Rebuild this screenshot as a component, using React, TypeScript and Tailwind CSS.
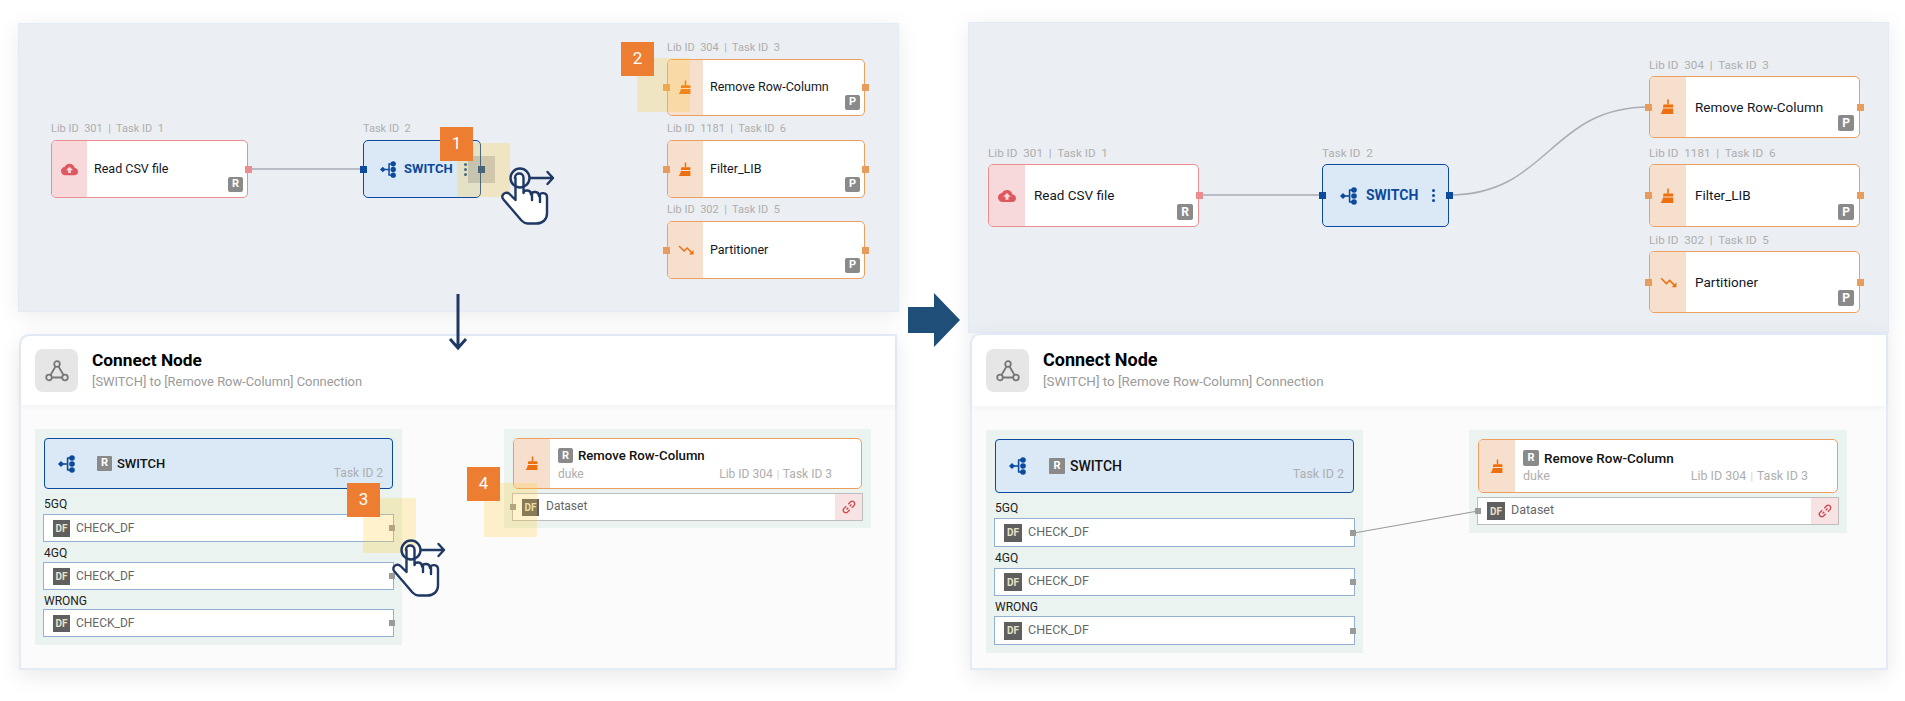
import React from 'react';

const NAVY = '#1f3864';

function CloudIcon({ size }: { size: number }) {
  return (
    <svg width={size} height={size} viewBox="0 0 24 24" fill="#e0585f">
      <path d="M19.35 10.04C18.67 6.59 15.64 4 12 4 9.11 4 6.6 5.64 5.35 8.04 2.34 8.36 0 10.91 0 14c0 3.31 2.69 6 6 6h13c2.76 0 5-2.24 5-5 0-2.64-2.05-4.78-4.65-4.96zM14 13v4h-4v-4H7l5-5 5 5h-3z" />
    </svg>
  );
}

function BroomIcon({ size }: { size: number }) {
  return (
    <svg width={size} height={size} viewBox="0 0 16 16" fill="#ee6f0d">
      <path d="M7.2 0.5h1.6v5h-1.6z" />
      <path d="M3.5 5.5h9.7v3H3z" />
      <path d="M3 9.5h10.2v5.500H0.500c1.200-1.200 2-3 2.500-5.500z" />
    </svg>
  );
}

function TrendIcon({ size }: { size: number }) {
  return (
    <svg width={size} height={size} viewBox="0 0 24 24" fill="#ee6f0d">
      <path d="M16 18l2.290-2.290-4.880-4.880-4 4L2 7.410 3.410 6l6 6 4-4 6.300 6.290L22 12v6z" />
    </svg>
  );
}

function SwitchIcon({ size }: { size: number }) {
  return (
    <svg width={size} height={size} viewBox="0 0 18 18" fill="#0b4a9c">
      <path d="M0 9l3-3 3 3-3 3z" />
      <path d="M5 8.200h5v1.600H5z" />
      <path d="M8.800 3h1.600v12H8.800z" />
      <circle cx="14" cy="3" r="2.800" />
      <circle cx="14" cy="9" r="2.800" />
      <circle cx="14" cy="15" r="2.800" />
      <path d="M9 2.300h4v1.400H9zM9 14.300h4v1.400H9z" />
    </svg>
  );
}

function NetworkIcon() {
  return (
    <svg width="24" height="22" viewBox="0 0 24 22" fill="none" stroke="#777" strokeWidth="1.800">
      <circle cx="12" cy="4" r="2.800" />
      <circle cx="4" cy="17.500" r="2.800" />
      <circle cx="20" cy="17.500" r="2.800" />
      <path d="M10.500 6.500L5.500 15M13.500 6.500l5 8.500M6.800 17.500h10.400" />
    </svg>
  );
}

function UnlinkIcon() {
  return (
    <svg width="16" height="16" viewBox="0 0 16 16" fill="none" stroke="#d2434b" strokeWidth="1.300">
      <g transform="rotate(-45 8 8)">
        <path d="M6.500 5.500H3.500a2.500 2.500 0 0 0 0 5h3" />
        <path d="M9.500 5.500h3a2.500 2.500 0 0 1 0 5h-3" />
        <path d="M4.500 8h2.500M9 8h2.500" />
      </g>
    </svg>
  );
}

// finger + ring + drag arrow
function Hand({ left, top }: { left: number; top: number }) {
  return (
    <svg className="absolute" style={{ left, top }} width="55" height="60" viewBox="0 0 55 60" fill="none" stroke={NAVY} strokeWidth="2.400" strokeLinejoin="round" strokeLinecap="round">
      <path fill="#fff" d="M15.500 11v22l-6-6c-2.500-2.500-6-1-7 1.500-.5 1.500 0 3 1 4l18 21c1.500 1.500 3 3 6 3h9c6 0 10.500-4 10.500-10V30c0-5-7-5-8-1 0-5-7-5-8-1.500 0-5-7-5-7.500-1.500V11c0-6-8.500-6-8.500 0z" />
      <path d="M32 27v6M40 29v6" />
      <circle cx="20" cy="11" r="9.500" />
      <path d="M30 11h23M47.500 5l5.500 6-5.500 6" />
    </svg>
  );
}

function Step({ n, left, top }: { n: number; left: number; top: number }) {
  return (
    <div className="absolute w-[33px] h-[34px] bg-[#ed7d31] text-white text-[17px] flex items-center justify-center" style={{ left, top }}>
      {n}
    </div>
  );
}

function Glow({ left, top, w = 53, h = 54 }: { left: number; top: number; w?: number; h?: number }) {
  return <div className="absolute bg-[#ffcc33]/25" style={{ left, top, width: w, height: h }} />;
}

function Port({ x, y, size, color }: { x: number; y: number; size: number; color: string }) {
  return <div className="absolute" style={{ left: x - size / 2, top: y - size / 2, width: size, height: size, background: color }} />;
}

type NodeProps = {
  x: number; y: number; w: number; h: number;
  name: string; label: string; badge: string;
  tone: 'red' | 'orange';
  icon: 'cloud' | 'broom' | 'trend';
  big?: boolean;
};

function FlowNode({ x, y, w, h, name, label, badge, tone, icon, big }: NodeProps) {
  const strip = big ? 36 : 35;
  const iconSize = big ? 18 : 17;
  return (
    <div className="absolute" style={{ left: x, top: y, width: w, height: h }}>
      <div className={`absolute left-0 -top-[19px] whitespace-pre leading-[16px] text-[#aeaeae] ${big ? 'text-[11.700px]' : 'text-[11px]'}`}>{label}</div>
      <div className={`h-full flex bg-white rounded-[5px] overflow-hidden border-[1.500px] ${tone === 'red' ? 'border-[#ec8d91]' : 'border-[#ec9f5f]'}`}>
        <div className={`shrink-0 flex items-center justify-center ${tone === 'red' ? 'bg-[#f8d9db]' : 'bg-[#f7dfcd]'}`} style={{ width: strip }}>
          {icon === 'cloud' && <CloudIcon size={iconSize} />}
          {icon === 'broom' && <BroomIcon size={iconSize - 2} />}
          {icon === 'trend' && <TrendIcon size={iconSize + 1} />}
        </div>
        <div className={`flex items-center text-[#111827] ${big ? 'pl-[9px] text-[13.500px]' : 'pl-[7px] text-[12.500px]'}`}>{name}</div>
      </div>
      <div className={`absolute flex items-center justify-center rounded-[2px] bg-[#8a8a8a] text-white font-bold ${big ? 'right-[6px] bottom-[7px] w-[16px] h-[16px] text-[12px]' : 'right-[5px] bottom-[6px] w-[15px] h-[15px] text-[11px]'}`}>{badge}</div>
      <Port x={-1} y={h / 2} size={7} color={tone === 'red' ? 'transparent' : '#e89c5c'} />
      <Port x={w} y={h / 2} size={7} color={tone === 'red' ? '#ec8d91' : '#e89c5c'} />
    </div>
  );
}

function SwitchNode({ x, y, w, h, big }: { x: number; y: number; w: number; h: number; big?: boolean }) {
  return (
    <div className="absolute" style={{ left: x, top: y, width: w, height: h }}>
      <div className={`absolute left-0 -top-[19px] whitespace-pre leading-[16px] text-[#aeaeae] ${big ? 'text-[11.700px]' : 'text-[11px]'}`}>Task ID  2</div>
      <div className={`h-full flex items-center rounded-[5px] bg-[#dbe9f7] border-[1.500px] border-[#0b4a9c] ${big ? 'pl-[17px]' : 'pl-[16px]'}`}>
        <SwitchIcon size={big ? 18 : 17} />
        <span className={`font-bold text-[#0b4a9c] ${big ? 'ml-[8px] text-[14px]' : 'ml-[7px] text-[13px]'}`}>SWITCH</span>
        <span className={`flex flex-col gap-[2px] ${big ? 'ml-[14px]' : 'ml-[11px]'}`}>
          <i className="block w-[3px] h-[3px] rounded-full bg-[#0b4a9c]" />
          <i className="block w-[3px] h-[3px] rounded-full bg-[#0b4a9c]" />
          <i className="block w-[3px] h-[3px] rounded-full bg-[#0b4a9c]" />
        </span>
      </div>
      <Port x={0} y={h / 2} size={7} color="#0b4a9c" />
      <Port x={w} y={h / 2} size={7} color="#0b4a9c" />
    </div>
  );
}

function DfBadge({ big }: { big?: boolean }) {
  return (
    <span className={`shrink-0 flex items-center justify-center bg-[#5f5f5f] text-[#e7e3c9] font-bold ${big ? 'w-[18px] h-[18px] text-[10px]' : 'w-[17px] h-[17px] text-[10px]'}`}>DF</span>
  );
}

function OutputRow({ label, h, labelH, big }: { label: string; h: string; labelH: string; big?: boolean }) {
  return (
    <>
      <div className={`${labelH} pl-px flex items-center text-[12px] text-[#222]`}>{label}</div>
      <div className={`${h} relative flex items-center bg-white border-[1.500px] border-[#93b0d2] pl-[9px]`}>
        <DfBadge big={big} />
        <span className={`ml-[6px] -mt-[1px] text-[#666] ${big ? 'text-[12.500px]' : 'text-[12px]'}`}>CHECK_DF</span>
        <div className="absolute -right-[2px] top-1/2 -translate-y-1/2 w-[6px] h-[6px] bg-[#9a9a9a]" />
      </div>
    </>
  );
}

function ConnectDialog({ big, className }: { big?: boolean; className: string }) {
  return (
    <div className={`relative flex flex-col bg-[#fbfbfb] border-2 border-[#e2ebf6] rounded-tl-[10px] shadow-[0_6px_22px_rgba(0,0,0,0.09)] ${className}`}>
      <div className={`flex items-center bg-white rounded-tl-[10px] shadow-[0_2px_6px_rgba(0,0,0,0.04)] pl-[14px] ${big ? 'h-[71px]' : 'h-[69px]'}`}>
        <div className="w-[43px] h-[43px] rounded-[8px] bg-[#e6e6e6] flex items-center justify-center"><NetworkIcon /></div>
        <div className="ml-[14px]">
          <div className={`font-bold text-black leading-[22px] ${big ? 'text-[18px]' : 'text-[17.300px]'}`}>Connect Node</div>
          <div className={`text-[#9a9a9a] leading-[20px] pt-[1px] ${big ? 'text-[13.400px]' : 'text-[12.900px]'}`}>[SWITCH] to [Remove Row-Column] Connection</div>
        </div>
      </div>
      <div className={`flex items-start pt-[24px] pl-[14px] ${big ? 'gap-[106px]' : 'gap-[102px]'}`}>
        {/* source */}
        <div className={`bg-[#eaf3ef] px-[8px] pt-[9px] pb-[8px] ${big ? 'w-[377px]' : 'w-[367px]'}`}>
          <div className={`mx-px relative flex items-center rounded-[4px] bg-[#dbe9f7] border-[1.500px] border-[#0b4a9c] pl-[13px] ${big ? 'h-[54px]' : 'h-[51px]'}`}>
            <SwitchIcon size={18} />
            <span className={`flex items-center justify-center bg-[#8a8a8a] text-white text-[11px] font-bold rounded-[1px] ${big ? 'ml-[22px] w-[16px] h-[16px]' : 'ml-[21px] w-[15px] h-[15px]'}`}>R</span>
            <span className={`ml-[5px] font-medium text-[#111] ${big ? 'text-[14px]' : 'text-[13px]'}`}>SWITCH</span>
            <span className={`absolute right-[9px] text-[#aeaeae] ${big ? 'bottom-[8px] text-[12.500px]' : 'bottom-[6px] text-[12px]'}`}>Task ID 2</span>
          </div>
          <OutputRow label="5GQ" labelH="h-[25px] pt-[4px]" h={big ? 'h-[29px]' : 'h-[28px]'} big={big} />
          <OutputRow label="4GQ" labelH={big ? 'h-[21px] pt-[1px]' : 'h-[20px] pt-[2px]'} h="h-[28px]" big={big} />
          <OutputRow label="WRONG" labelH={big ? 'h-[20px] pt-[2px]' : 'h-[19px] pt-[2px]'} h={big ? 'h-[29px]' : 'h-[28px]'} big={big} />
        </div>
        {/* target */}
        <div className={`bg-[#eaf3ef] px-[8px] pt-[9px] ${big ? 'w-[378px] pb-[8px]' : 'w-[367px] pb-[7px]'}`}>
          <div className={`mx-px flex rounded-[5px] overflow-hidden bg-white border-[1.500px] border-[#ec9f5f] ${big ? 'h-[54px]' : 'h-[51px]'}`}>
            <div className="w-[36px] shrink-0 bg-[#f7dfcd] flex items-center justify-center"><BroomIcon size={15} /></div>
            <div className="flex-1 pl-[8px] pr-[29px] pt-[2px] flex flex-col justify-center">
              <div className="flex items-center leading-[16px]">
                <span className={`flex items-center justify-center bg-[#8a8a8a] text-white text-[11px] font-bold rounded-[2px] ${big ? 'w-[16px] h-[16px]' : 'w-[15px] h-[15px]'}`}>R</span>
                <span className={`ml-[5px] font-medium text-[#111] ${big ? 'text-[13.500px]' : 'text-[13.200px]'}`}>Remove Row-Column</span>
              </div>
              <div className={`flex justify-between text-[#aeaeae] mt-[3px] leading-[14px] ${big ? 'text-[12.500px]' : 'text-[12px]'}`}>
                <span>duke</span>
                <span>Lib ID 304 <span className="text-[#ccc] text-[10px] mx-[1px]">|</span> Task ID 3</span>
              </div>
            </div>
          </div>
          <div className="mt-[4px] h-[28px] relative flex items-center bg-white border-[1.500px] border-[#bdbdbd] pl-[9px]">
            <DfBadge big={big} />
            <span className={`-mt-[2px] text-[#666] ${big ? 'ml-[6px] text-[12.500px]' : 'ml-[7px] text-[12px]'}`}>Dataset</span>
            <div className="absolute -left-[3px] top-1/2 -translate-y-1/2 w-[6px] h-[6px] bg-[#9a9a9a]" />
            <div className="ml-auto w-[27px] h-full bg-[#f7e3e3] flex items-center justify-center"><UnlinkIcon /></div>
          </div>
        </div>
      </div>
    </div>
  );
}

const leftNodes: NodeProps[] = [
  { x: 32, y: 116, w: 197, h: 58, name: 'Read CSV file', label: 'Lib ID  301  |  Task ID  1', badge: 'R', tone: 'red', icon: 'cloud' },
  { x: 648, y: 35, w: 198, h: 57, name: 'Remove Row-Column', label: 'Lib ID  304  |  Task ID  3', badge: 'P', tone: 'orange', icon: 'broom' },
  { x: 648, y: 116, w: 198, h: 58, name: 'Filter_LIB', label: 'Lib ID  1181  |  Task ID  6', badge: 'P', tone: 'orange', icon: 'broom' },
  { x: 648, y: 197, w: 198, h: 58, name: 'Partitioner', label: 'Lib ID  302  |  Task ID  5', badge: 'P', tone: 'orange', icon: 'trend' },
];

const rightNodes: NodeProps[] = [
  { x: 19, y: 141, w: 211, h: 63, name: 'Read CSV file', label: 'Lib ID  301  |  Task ID  1', badge: 'R', tone: 'red', icon: 'cloud', big: true },
  { x: 680, y: 53, w: 211, h: 62, name: 'Remove Row-Column', label: 'Lib ID  304  |  Task ID  3', badge: 'P', tone: 'orange', icon: 'broom', big: true },
  { x: 680, y: 141, w: 211, h: 63, name: 'Filter_LIB', label: 'Lib ID  1181  |  Task ID  6', badge: 'P', tone: 'orange', icon: 'broom', big: true },
  { x: 680, y: 228, w: 211, h: 62, name: 'Partitioner', label: 'Lib ID  302  |  Task ID  5', badge: 'P', tone: 'orange', icon: 'trend', big: true },
];

export default function App() {
  return (
    <div className="relative w-[1905px] h-[701px] overflow-hidden bg-white font-['Roboto',sans-serif] flex items-start">
      {/* before */}
      <div className="ml-[18px] mt-[23px] w-[881px] shrink-0">
        <div className="relative h-[289px] bg-[#ebeef3] border border-[#e2ebf6] shadow-[0_4px_22px_rgba(0,0,0,0.08)]">
          <div className="absolute left-[229px] top-[144px] w-[115px] h-[2px] bg-[#b8bcc4]" />
          {leftNodes.map((n) => <FlowNode key={n.name} {...n} />)}
          <SwitchNode x={344} y={116} w={118} h={58} />
        </div>
        <ConnectDialog className="mt-[22px] ml-px w-[878px] h-[336px]" />
      </div>

      {/* after */}
      <div className="ml-[69px] mt-[22px] w-[921px] shrink-0">
        <div className="relative h-[311px] bg-[#ebeef3] border border-[#e2ebf6] shadow-[0_4px_22px_rgba(0,0,0,0.08)]">
          <svg className="absolute left-0 top-0" width="921" height="311" fill="none">
            <path d="M230 172H353" stroke="#b8bcc4" strokeWidth="2" />
            <path d="M480 172C580 172 580 84 680 84" stroke="#aaaeb4" strokeWidth="1.500" />
          </svg>
          {rightNodes.map((n) => <FlowNode key={n.name} {...n} />)}
          <SwitchNode x={353} y={141} w={127} h={63} big />
        </div>
        <ConnectDialog big className="ml-[2px] w-[918px] h-[337px]" />
      </div>

      {/* wire between outputs and dataset */}
      <svg className="absolute left-0 top-0 pointer-events-none" width="1905" height="701" fill="none">
        <path d="M1354 533L1478 511" stroke="#9a9a9a" strokeWidth="1.200" />
      </svg>

      {/* step annotations */}
      <Glow left={457} top={143} />
      <div className="absolute left-[468px] top-[156px] w-[27px] h-[27px] bg-[#505050]/20" />
      <Hand left={500} top={167} />
      <Step n={1} left={440} top={127} />
      <Glow left={637} top={58} />
      <Step n={2} left={621} top={42} />
      <Glow left={363} top={498} h={55} />
      <Hand left={391} top={539} />
      <Step n={3} left={347} top={483} />
      <Glow left={484} top={483} />
      <Step n={4} left={467} top={467} />

      {/* arrows */}
      <svg className="absolute left-[445px] top-[292px]" width="26" height="60" viewBox="0 0 26 60" fill="none" stroke={NAVY} strokeWidth="3">
        <path d="M13 2v54M5 47l8 9 8-9" />
      </svg>
      <svg className="absolute left-[908px] top-[293px]" width="52" height="54" viewBox="0 0 52 54" fill="#1f4e79">
        <path d="M0 14h26V0l26 27-26 27V40H0z" />
      </svg>
    </div>
  );
}
